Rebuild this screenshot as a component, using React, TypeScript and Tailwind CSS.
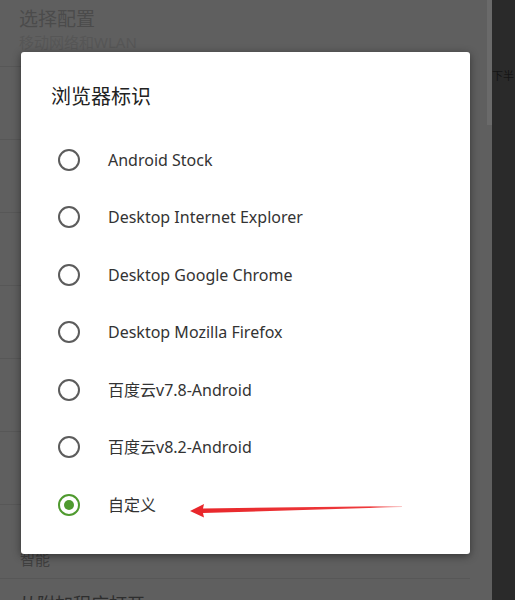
import React from 'react'

const OPTIONS = [
  'Android Stock',
  'Desktop Internet Explorer',
  'Desktop Google Chrome',
  'Desktop Mozilla Firefox',
  '百度云v7.8-Android',
  '百度云v8.2-Android',
  '自定义',
]

const font = { fontFamily: '"Noto Sans", "Noto Sans CJK SC", sans-serif' }

function Radio({ checked }: { checked: boolean }) {
  return checked ? (
    <span className="flex h-[22px] w-[22px] shrink-0 items-center justify-center rounded-full border-2 border-[#4f9a2f]">
      <span className="h-[10px] w-[10px] rounded-full bg-[#4f9a2f]" />
    </span>
  ) : (
    <span className="h-[22px] w-[22px] shrink-0 rounded-full border-2 border-[#5c5c5c]" />
  )
}

export default function App() {
  const selected = 6
  return (
    <div
      className="relative flex h-[600px] w-[515px] overflow-hidden bg-[#5f5f5f] font-['Noto_Sans','Noto_Sans_CJK_SC',sans-serif]"
      style={font}
    >
      {/* settings list behind the dim overlay */}
      <div className="flex flex-1 flex-col">
        <div className="flex h-[67px] shrink-0 flex-col border-b border-[#575757] pl-[19px] pt-[6px]">
          <span className="text-[19px] leading-[26px] text-[#4b4b4b]">选择配置</span>
          <span className="text-[15px] leading-[20px] text-[#565656]">移动网络和WLAN</span>
        </div>
        {[0, 1, 2, 3, 4, 5].map((i) => (
          <div key={i} className="h-[73px] shrink-0 border-b border-[#575757]" />
        ))}
        <div className="flex h-[74px] shrink-0 flex-col justify-end border-b border-[#575757] pb-[9px] pl-[20px]">
          <span className="text-[15px] leading-[20px] text-[#404040]">智能</span>
        </div>
        <div className="pl-[19px] pt-[13px]">
          <span className="text-[18px] leading-[24px] text-[#2e2e2e]">从附加程序打开</span>
        </div>
      </div>
      <div className="flex w-[22px] shrink-0 justify-end">
        <div className="h-[125px] w-[5px] bg-[#6a6a6a]" />
      </div>
      <div className="w-[23px] shrink-0 bg-[#2a2a2a] pt-[62px]">
        <span className="text-[11px] leading-none text-[#151515]">下半</span>
      </div>

      {/* dialog */}
      <div className="absolute left-[21px] top-[52px] h-[502px] w-[449px] rounded-[3px] bg-white shadow-[0_2px_8px_rgba(0,0,0,0.45)]">
        <div className="pl-[30px] pt-[31px] text-[20px] leading-[28px] text-[#222]">浏览器标识</div>
        <div className="mt-[20px] flex flex-col">
          {OPTIONS.map((label, i) => (
            <div key={label} className="flex h-[57.5px] items-center gap-[28px] pl-[37px]">
              <Radio checked={i === selected} />
              <span className="text-[16px] leading-[22px] text-[#333]">{label}</span>
            </div>
          ))}
        </div>
      </div>

      {/* red annotation arrow */}
      <svg
        className="absolute left-[188px] top-[498px]"
        width="218"
        height="24"
        viewBox="0 0 218 24"
      >
        <defs>
          <linearGradient id="tail" x1="0" x2="1" y1="0" y2="0">
            <stop offset="0" stopColor="#e8262a" />
            <stop offset="0.85" stopColor="#ee3a3c" />
            <stop offset="1" stopColor="#f47a7a" stopOpacity="0.4" />
          </linearGradient>
        </defs>
        <polygon
          points="2,13 16,6 15,10.5 214,8 214,9 15,15 16,19.5"
          fill="url(#tail)"
        />
      </svg>
    </div>
  )
}
